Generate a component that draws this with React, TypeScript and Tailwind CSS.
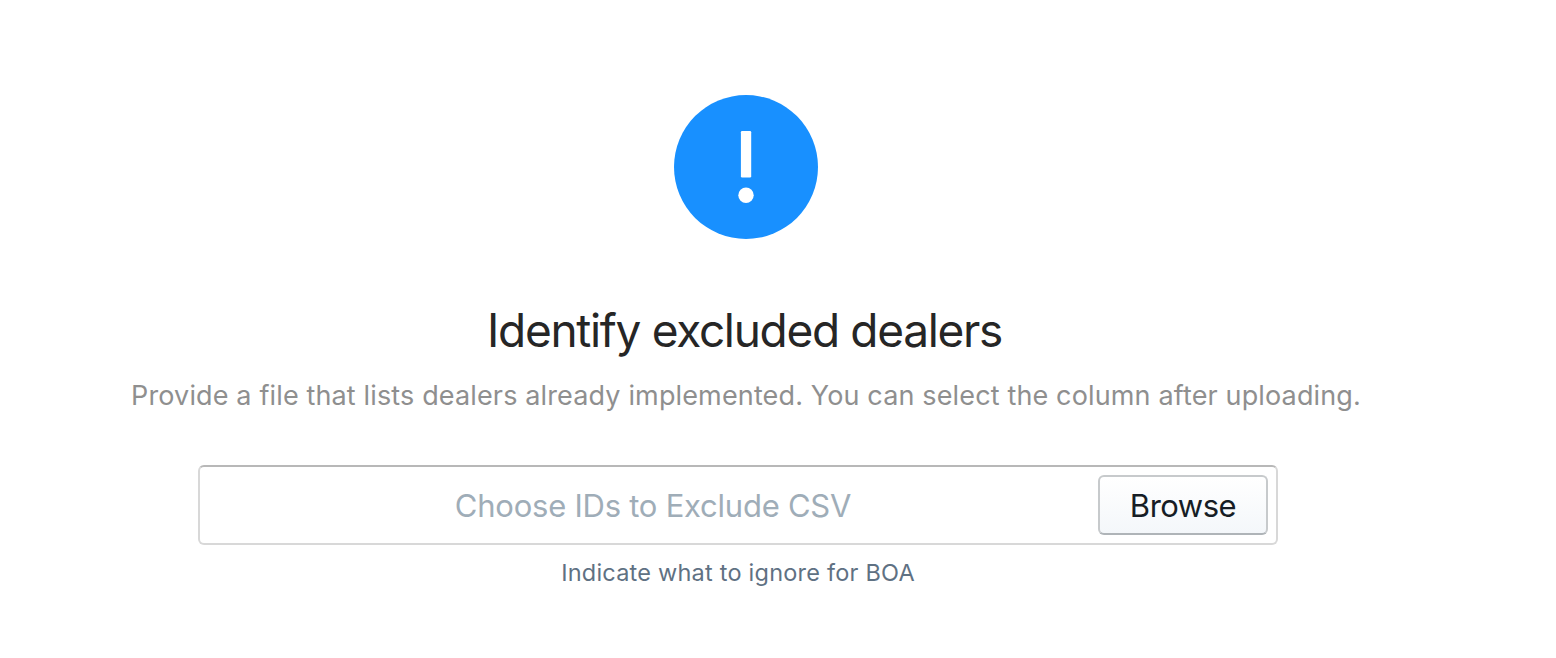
export default function App() {
  return (
    <main className="flex h-[658px] w-full flex-col overflow-hidden bg-white pt-[95px] font-['Inter',sans-serif]">
      <div className="flex w-[1492px] flex-col items-center">
        <svg className="size-36" viewBox="0 0 144 144" aria-hidden="true">
          <circle cx="72" cy="72" r="72" fill="#1890ff" />
          <rect x="66.9" y="36" width="10.3" height="46.4" rx="1.2" fill="#fff" />
          <circle cx="72" cy="100.3" r="7.7" fill="#fff" />
        </svg>
        <h1 className="mt-[59px] h-16 whitespace-nowrap pr-[3px] text-[46px] leading-[64px] tracking-[-1.32px] text-[#262626]">
          Identify excluded dealers
        </h1>
        <p className="mt-[11px] h-11 whitespace-nowrap text-[27px] leading-[45px] tracking-[0.14px] text-[#8f8f8f]">
          Provide a file that lists dealers already implemented. You can select the column after uploading.
        </p>
      </div>
      <div className="ml-[198px] mt-[48px] flex w-[1080px] flex-col items-center">
        <label className="flex h-20 w-full items-center rounded-[6px] border-2 border-[#d8d8d8] border-t-[#b8b8b8] pr-2">
          <span className="flex-1 pt-[3px] pl-[8px] text-center text-[31px] tracking-[-0.24px] text-[#9fadb8]">Choose IDs to Exclude CSV</span>
          <button className="h-[60px] w-[170px] rounded-[6px] border-2 border-[#c7cacc] border-b-[#afb4b8] bg-linear-to-b from-white to-[#f4f7fa] pt-[3px] text-[31px] tracking-[-0.5px] text-[#161d25]">Browse</button>
        </label>
        <p className="mt-2 h-10 text-[23.5px] leading-10 tracking-[0.22px] text-[#5f7183]">Indicate what to ignore for BOA</p>
      </div>
    </main>
  );
}
